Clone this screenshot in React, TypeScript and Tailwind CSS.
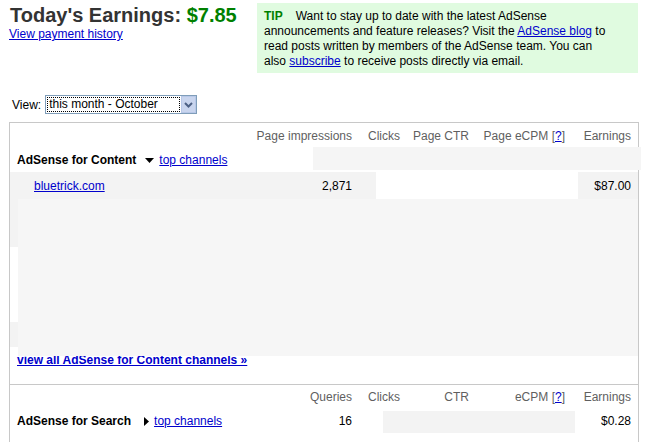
const Help = () => (
  <span className="text-[#5f5f5f]">
    [<a href="#" className="text-[#0000cc] underline">?</a>]
  </span>
);

const DownTri = () => (
  <svg width="9" height="5" viewBox="0 0 9 5" className="inline-block">
    <path d="M0 0h9L4.5 5z" fill="#000" />
  </svg>
);

const RightTri = () => (
  <svg width="5" height="9" viewBox="0 0 5 9" className="inline-block">
    <path d="M0 0v9l5-4.5z" fill="#000" />
  </svg>
);

const cols = "grid grid-cols-[242px_100px_48px_69px_96px_66px] pr-[7px]";

export default function App() {
  return (
    <div className="w-[653px] h-[442px] overflow-hidden bg-white text-[12px] text-black font-['Liberation_Sans',Arial,sans-serif]">
      <div className="flex">
        <div className="pl-[10px] pt-[4px]">
          <h1 className="text-[20px] leading-[22px] font-bold text-[#333]">
            Today's Earnings: <span className="text-[#008000]">$7.85</span>
          </h1>
          <a href="#" className="block mt-[1px] -ml-[1px] leading-[14px] text-[#0000cc] underline">
            View payment history
          </a>
        </div>
        <div className="ml-auto mr-[15px] mt-[3px] w-[381px] h-[70px] bg-[#e0fbe0] pl-[7px] pt-[6px] leading-[15px] whitespace-nowrap">
          <span className="font-bold text-[#008000] mr-[13px]">TIP</span>
          Want to stay up to date with the latest AdSense
          <br />
          announcements and feature releases? Visit the{" "}
          <a href="#" className="text-[#0000cc] underline">AdSense blog</a> to
          <br />
          read posts written by members of the AdSense team. You can
          <br />
          also <a href="#" className="text-[#0000cc] underline">subscribe</a> to receive posts directly via email.
        </div>
      </div>

      <div className="flex items-center mt-[22px] pl-[12px] h-[19px]">
        <span className="mr-[4px]">View:</span>
        <div className="flex w-[152px] h-[19px] border border-[#7f9db9] bg-white">
          <div className="flex-1 m-[1px] border border-dotted border-black leading-[13px] pl-[1px]">
            this month - October
          </div>
          <div className="w-[15px] h-[17px] bg-[#c9d5ee] border border-[#b8c8e8] flex items-center justify-center">
            <svg width="9" height="6" viewBox="0 0 9 6">
              <path d="M1 1l3.5 3.5L8 1" stroke="#4d6185" strokeWidth="2" fill="none" />
            </svg>
          </div>
        </div>
      </div>

      <div className="ml-[9px] mt-[8px] w-[630px] h-[340px] border border-b-0 border-[#c8c8c8]">
        <div className={`${cols} h-[24px] pt-[2px] items-center text-[#5f5f5f]`}>
          <div />
          <div className="text-right">Page impressions</div>
          <div className="text-right">Clicks</div>
          <div className="text-right">Page CTR</div>
          <div className="text-right">
            Page eCPM <Help />
          </div>
          <div className="text-right">Earnings</div>
        </div>

        <div className="relative h-[24px] pt-[2px] flex items-center pl-[7px]">
          <span className="font-bold">AdSense for Content</span>
          <span className="ml-[9px] mr-[5px] flex items-center">
            <DownTri />
          </span>
          <a href="#" className="text-[#0000cc] underline">top channels</a>
          <div className="absolute left-[303px] -right-[3px] top-0 h-[23px] bg-[#f5f5f5]" />
        </div>

        <div className={`${cols} relative mt-[1px] h-[27px] items-center bg-[#f3f3f3]`}>
          <div className="pl-[24px]">
            <a href="#" className="text-[#0000cc] underline">bluetrick.com</a>
          </div>
          <div className="text-right">2,871</div>
          <div />
          <div />
          <div />
          <div className="text-right">$87.00</div>
          <div className="absolute left-[366px] w-[202px] top-0 h-full bg-white" />
        </div>

        <div className="flex h-[157px]">
          <div className="w-[8px] flex flex-col">
            <div className="h-[48px] bg-[#f3f3f3]" />
            <div className="h-[75px]" />
            <div className="h-[25px] bg-[#f3f3f3]" />
          </div>
          <div className="relative z-10 flex-1 bg-[#f6f6f6]" />
        </div>

        <div className="pl-[7px] pb-[17px] -mt-[3px] leading-[14px] font-bold">
          <a href="#" className="text-[#0000cc] underline">view all AdSense for Content channels »</a>
        </div>

        <div className="border-t border-[#c8c8c8]">
          <div className={`${cols} h-[24px] items-center text-[#5f5f5f]`}>
            <div />
            <div className="text-right">Queries</div>
            <div className="text-right">Clicks</div>
            <div className="text-right">CTR</div>
            <div className="text-right">
              eCPM <Help />
            </div>
            <div className="text-right">Earnings</div>
          </div>
          <div className={`${cols} relative h-[24px] items-center`}>
            <div className="flex items-center pl-[7px]">
              <span className="font-bold">AdSense for Search</span>
              <span className="ml-[13px] mr-[5px] flex items-center">
                <RightTri />
              </span>
              <a href="#" className="text-[#0000cc] underline">top channels</a>
            </div>
            <div className="text-right">16</div>
            <div />
            <div />
            <div />
            <div className="text-right">$0.28</div>
            <div className="absolute left-[373px] w-[192px] top-[2px] h-[22px] bg-[#f3f3f3]" />
          </div>
        </div>
      </div>
    </div>
  );
}
